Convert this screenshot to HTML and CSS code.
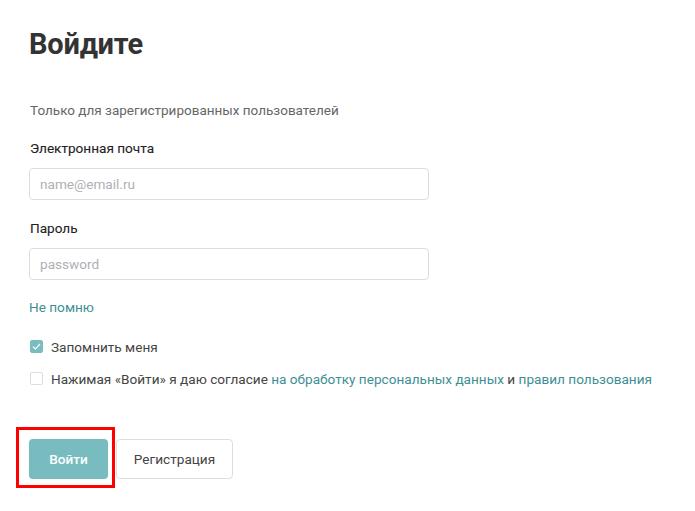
FILE: index.html
```html
<!DOCTYPE html>
<html lang="ru">
<head>
<meta charset="utf-8">
<link rel="stylesheet" href="styles.css">
</head>
<body>
<div class="page">
  <h1 class="title">Войдите</h1>
  <p class="note">Только для зарегистрированных пользователей</p>
  <div class="field">
    <label class="label">Электронная почта</label>
    <input class="input" type="text" placeholder="name@email.ru">
  </div>
  <div class="field">
    <label class="label">Пароль</label>
    <input class="input" type="password" placeholder="password">
  </div>
  <a class="forgot">Не помню</a>
  <div class="check-row check-first">
    <span class="box box-on">
      <svg width="9" height="7" viewBox="0 0 9 7"><path d="M1 3.6 L3.4 6 L8 1" fill="none" stroke="#fff" stroke-width="1.2"/></svg>
    </span>
    <span class="check-text">Запомнить меня</span>
  </div>
  <div class="check-row">
    <span class="box"></span>
    <span class="check-text">Нажимая «Войти» я даю согласие <a class="link">на обработку персональных данных</a> и <a class="link">правил пользования</a></span>
  </div>
  <div class="actions">
    <div class="primary-wrap">
      <button class="btn btn-primary">Войти</button>
      <span class="highlight"></span>
    </div>
    <button class="btn btn-secondary">Регистрация</button>
  </div>
</div>
</body>
</html>
```
FILE: styles.css
```css
* { box-sizing: border-box; }
html, body { margin: 0; padding: 0; background: #fff; }
body { font-family: Roboto, "Liberation Sans", sans-serif; color: #333; }
.page { padding: 27px 29px 0 29px; width: 695px; min-height: 511px; }
.title { margin: 0; font-size: 29px; font-weight: 700; line-height: 34px; color: #333; letter-spacing: -0.2px; }
.note { margin: 41px 0 0 1px; font-size: 13.5px; line-height: 16px; color: #666; }
.field { margin-top: 22px; display: flex; flex-direction: column; }
.field + .field { margin-top: 20px; }
.label { font-size: 13.6px; line-height: 16px; color: #222; font-weight: 400; padding-left: 1px; -webkit-text-stroke: 0.1px #222; }
.input { margin-top: 12px; width: 400px; height: 32px; border: 1px solid #dcdde3; border-radius: 4px; padding: 0 10px; font-family: inherit; font-size: 13.6px; color: #333; outline: none; }
.input::placeholder { color: #aeb0b6; }
.forgot { display: block; margin-top: 19px; font-size: 13.6px; line-height: 16px; color: #3e8f95; }
.check-row { display: flex; align-items: center; gap: 8px; height: 13px; padding-left: 1px; }
.check-first { margin-top: 25px; }
.check-row + .check-row { margin-top: 19px; }
.box { width: 13px; height: 13px; border: 1px solid #dcdde3; border-radius: 2px; display: flex; align-items: center; justify-content: center; flex: none; }
.box-on { background: #79bdc0; border-color: #79bdc0; }
.check-text { font-size: 13.6px; line-height: 16px; color: #444; }
.link { color: #3e8f95; }
.actions { display: flex; gap: 8px; margin-top: 54px; }
.primary-wrap { position: relative; }
.btn { height: 40px; border-radius: 4px; font-family: inherit; font-size: 13.6px; padding: 0; }
.btn-primary { width: 79px; background: #78bcbf; border: none; color: #fff; font-weight: 500; }
.btn-secondary { width: 117px; background: #fff; border: 1px solid #dcdde3; color: #444; }
.highlight { position: absolute; left: -13px; top: -12px; width: 99px; height: 61px; border: 3px solid #f00; pointer-events: none; }
```
